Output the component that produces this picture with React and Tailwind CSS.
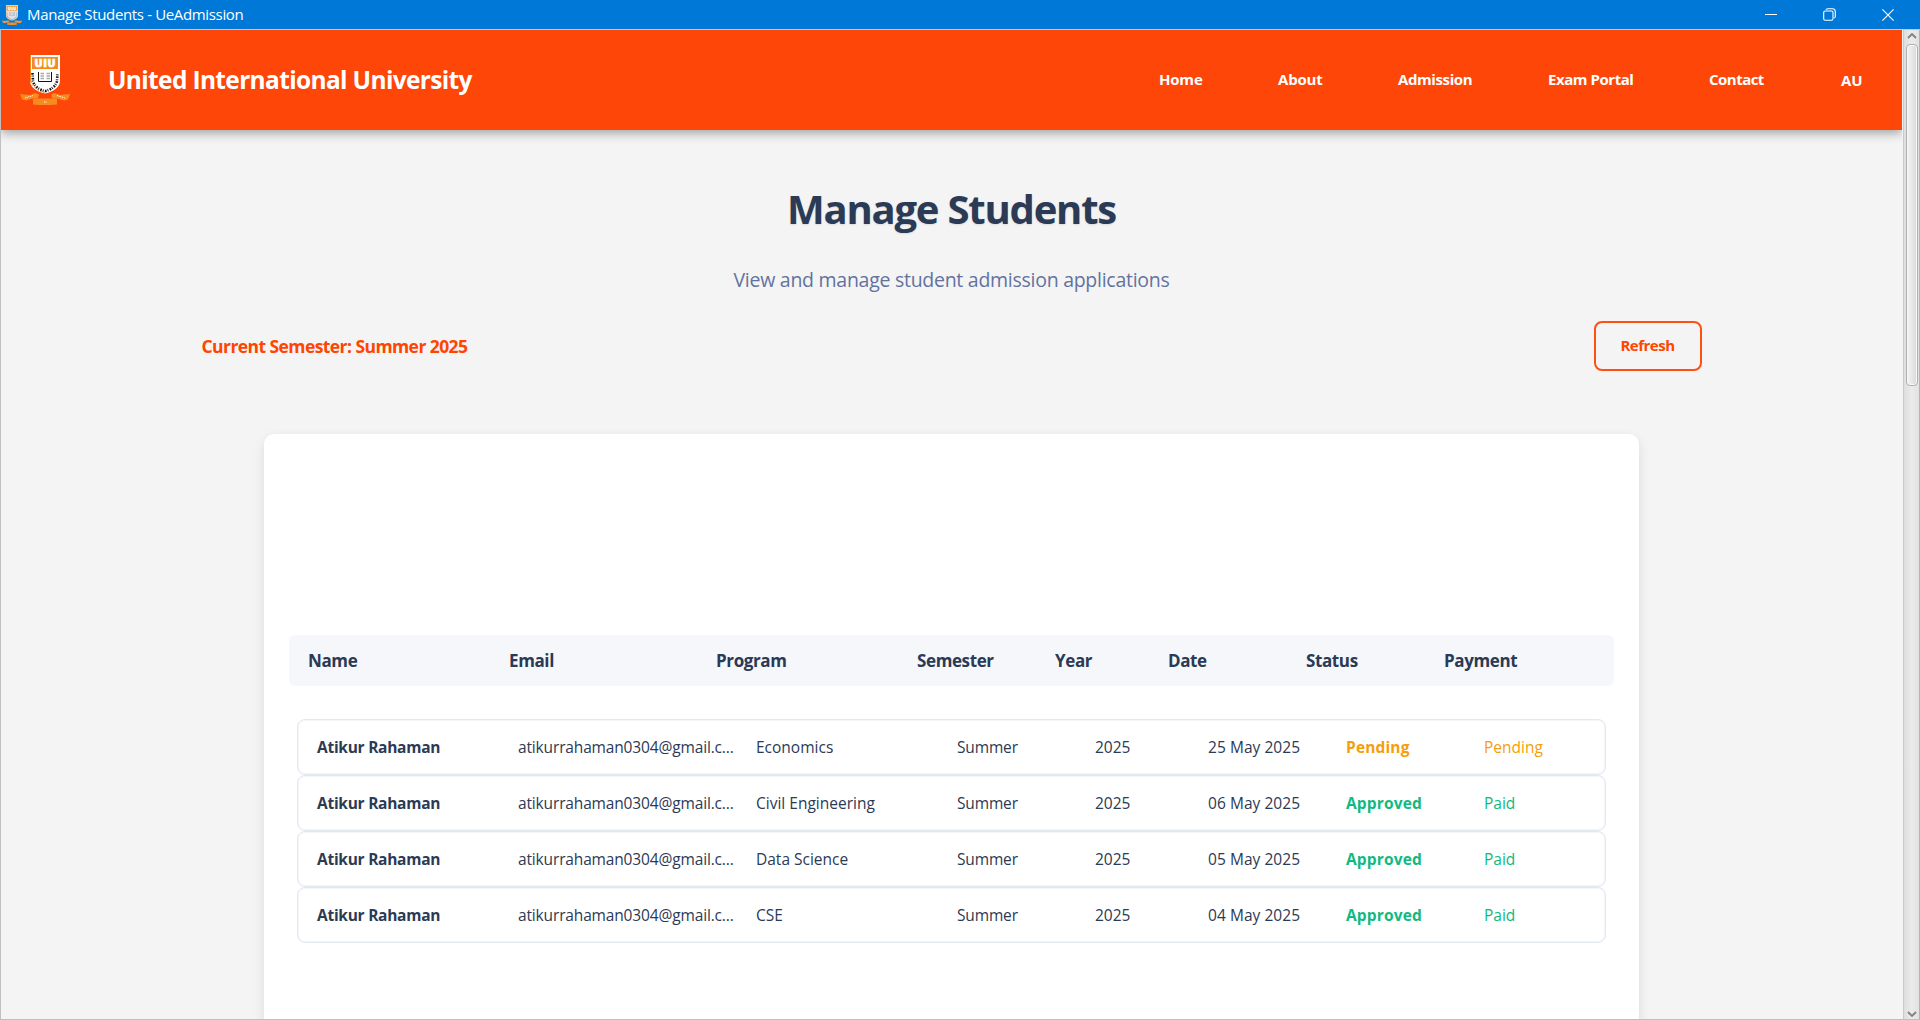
import React from "react";

const navItems = [
  { label: "Home", cls: "w-[119px] tracking-[-0.2px]" },
  { label: "About", cls: "w-[120px] tracking-[-0.2px]" },
  { label: "Admission", cls: "w-[150px] tracking-[-0.4px]" },
  { label: "Exam Portal", cls: "w-[161px] tracking-[-0.45px]" },
  { label: "Contact", cls: "w-[132px] tracking-[-0.52px]" },
];

const students = [
  { program: "Economics", date: "25 May 2025", status: "Pending", payment: "Pending" },
  { program: "Civil Engineering", date: "06 May 2025", status: "Approved", payment: "Paid" },
  { program: "Data Science", date: "05 May 2025", status: "Approved", payment: "Paid" },
  { program: "CSE", date: "04 May 2025", status: "Approved", payment: "Paid" },
];

function Crest({ className, muted = false }) {
  const ink = muted ? "#8b97a5" : "#111111";
  const body = muted ? "#dfe3e8" : "#ffffff";
  return (
    <svg viewBox="0 0 50 50" className={className} aria-hidden="true">
      <path d="M10 0H40V26C40 32 33 37 25 38.500C17 37 10 32 10 26Z" fill={body} />
      <path d="M10.500 0V27" stroke="#f68b1f" strokeWidth="1" />
      <rect x="12" y="2" width="26" height="12" fill="#f68b1f" />
      <text
        x="25"
        y="12"
        textAnchor="middle"
        textLength="21"
        lengthAdjust="spacing"
        fontSize="10.500"
        fontWeight="800"
        fill="#fff"
        stroke="#fff"
        strokeWidth="0.7"
      >
        UIU
      </text>
      <path d="M12.500 18L13 26C14 31 19 35 25 36C31 35 36 31 37 26L37.500 18" fill="none" stroke={ink} strokeWidth="2.600" strokeDasharray="1.600 1 0.900 1.400" />
      <path d="M11 26C12 31 17 36 25 38" fill="none" stroke="#f68b1f" strokeWidth="1" strokeDasharray="2 1.500" />
      <path d="M18.500 17V26.500H31.500V17" fill="none" stroke={ink} strokeWidth="1" />
      <path d="M20.500 18.500H24M26.500 18.500H30M20.500 21H24M26.500 21H30M20.500 23.500H24M26.500 23.500H30" stroke="#aaa" strokeWidth="1.300" />
      <path d="M0 39L10 40L15 38L19 39.500L18 43L13 43.500L6 45.500L2 44.500Z" fill="#f68b1f" />
      <path d="M50 39L40 40L35 38L31 39.500L32 43L37 43.500L44 45.500L48 44.500Z" fill="#f68b1f" />
      <path d="M13 43.500H37V49.500Q25 50.500 13 49.500Z" fill="#f68b1f" />
      <path d="M5 43L13 40.500M37 40.500L45 43M24 47H27" stroke="#fff" strokeWidth="1" strokeDasharray="1.500 1" />
    </svg>
  );
}

function TitleBar() {
  return (
    <div className="flex h-[29px] shrink-0 items-center bg-[#0078d7] text-white">
      <Crest muted className="ml-0.5 size-5" />
      <span className="ml-[5px] grow text-[15px] tracking-[-0.35px]">
        Manage Students - UeAdmission
      </span>
      <svg className="mr-[46px] size-3" viewBox="0 0 12 12" stroke="currentColor" fill="none">
        <path d="M0 5.500H12" />
      </svg>
      <svg className="mr-[46px] size-[13px]" viewBox="0 0 13 13" stroke="currentColor" strokeWidth="1.100" fill="none">
        <rect x="0.700" y="3" width="9.300" height="9.300" rx="1.500" />
        <path d="M3 1.800Q3.300 0.700 4.500 0.700H9.500Q12.300 0.700 12.300 3.500V8.500Q12.300 9.700 11.200 10" />
      </svg>
      <svg className="mr-[26px] size-3" viewBox="0 0 12 12" stroke="currentColor" strokeWidth="1.100" fill="none">
        <path d="M0.400 0.400L11.600 11.600M11.600 0.400L0.400 11.600" />
      </svg>
    </div>
  );
}

function Header() {
  return (
    <header className="flex h-[100px] shrink-0 items-center bg-[#fd4607] text-white shadow-[0_3px_10px_rgba(0,0,0,0.35)]">
      <Crest className="ml-[19px] size-[50px]" />
      <span className="ml-[38px] grow text-[24.500px] font-bold tracking-[-0.66px]">
        United International University
      </span>
      <nav className="flex text-[15px] font-bold">
        {navItems.map((item) => (
          <a key={item.label} className={item.cls}>
            {item.label}
          </a>
        ))}
        <span className="w-[61px] pt-px">AU</span>
      </nav>
    </header>
  );
}

function Chevron({ up = false }) {
  return (
    <svg viewBox="0 0 10 6" className="h-1.5 w-2.5" fill="none" stroke="#808080" strokeWidth="1.800">
      <path d={up ? "M1 5L5 1L9 5" : "M1 1L5 5L9 1"} />
    </svg>
  );
}

function Scrollbar() {
  return (
    <div className="ml-px flex w-[17px] shrink-0 flex-col items-center border-x border-l-[#c9c9c9] border-r-[#b4b4b4] bg-linear-to-r from-[#dedede] via-[#ebebeb] to-[#e2e2e2] pt-[3px] pb-[2px]">
      <Chevron up />
      <div className="mt-[5px] mb-auto h-[342px] w-3 rounded-[4px] border border-[#b0b0b0] bg-linear-to-r from-[#f4f4f4] to-[#d9d9d9] shadow-[inset_0_0_0_1px_#f7f7f7]" />
      <Chevron />
    </div>
  );
}

function TableHead() {
  return (
    <div className="flex h-[51px] items-center rounded-md bg-[#f5f7fb] pl-[19px] text-[17px] font-bold tracking-[-0.38px] text-[#2b3a55]">
      <span className="w-[201px]">Name</span>
      <span className="w-[207px]">Email</span>
      <span className="w-[201px]">Program</span>
      <span className="w-[138px]">Semester</span>
      <span className="w-[113px]">Year</span>
      <span className="w-[138px]">Date</span>
      <span className="w-[138px]">Status</span>
      <span>Payment</span>
    </div>
  );
}

function StudentRow({ student }) {
  const pending = student.status === "Pending";
  const tone = pending ? "text-[#f59e0b]" : "text-[#10b981]";
  return (
    <div className="flex h-14 items-center rounded-lg border border-[#e2e8f0] pt-px pl-[19px] text-[15.500px] whitespace-nowrap text-[#2b3a55] shadow-[inset_0_0_0_1px_#f3f5f9]">
      <span className="w-[201px] font-bold tracking-[-0.27px]">Atikur Rahaman</span>
      <span className="w-[238px] tracking-[-0.15px]">atikurrahaman0304@gmail.c...</span>
      <span className="w-[201px]">{student.program}</span>
      <span className="w-[138px] tracking-[-0.15px]">Summer</span>
      <span className="w-[113px]">2025</span>
      <span className="w-[138px] tracking-[0.05px]">{student.date}</span>
      <span className={`w-[138px] font-bold tracking-[0.15px] ${tone}`}>{student.status}</span>
      <span className={tone}>{student.payment}</span>
    </div>
  );
}

export default function App() {
  return (
    <div className="flex h-[1020px] w-[1920px] flex-col overflow-hidden font-['Open_Sans','Noto_Sans',sans-serif]">
      <TitleBar />
      <div className="flex min-h-0 grow border-y border-l border-t-[#c6c6c6] border-b-[#c0c0c0] border-l-[#c0c0c0] bg-[#f4f4f4]">
        <div className="flex w-[1901px] shrink-0 flex-col overflow-hidden">
          <Header />
          <main className="flex flex-col items-center">
            <h1 className="mt-[49px] text-[40px] leading-[60px] font-bold tracking-[-1.2px] text-[#2b3a55] [text-shadow:0_1px_2px_rgba(0,0,0,0.1)]">
              Manage Students
            </h1>
            <p className="mt-[26px] text-[19.500px] leading-[30px] tracking-[-0.27px] text-[#6272a0]">
              View and manage student admission applications
            </p>
            <div className="mt-[26px] flex h-[50px] w-[1500px] items-center justify-between text-[#ff4500]">
              <span className="text-[17.500px] font-bold tracking-[-0.57px]">
                Current Semester: Summer 2025
              </span>
              <button className="h-[50px] w-[108px] rounded-lg border-2 border-[#ff4f12] pb-0.5 text-[15px] font-bold tracking-[-0.5px]">
                Refresh
              </button>
            </div>
            <section className="mt-[63px] h-[640px] w-[1375px] rounded-[10px] bg-white px-[25px] pt-[201px] shadow-[0_4px_12px_rgba(0,0,0,0.1)]">
              <TableHead />
              <div className="mt-[33px] px-2">
                {students.map((student) => (
                  <StudentRow key={student.date} student={student} />
                ))}
              </div>
            </section>
          </main>
        </div>
        <Scrollbar />
      </div>
    </div>
  );
}
